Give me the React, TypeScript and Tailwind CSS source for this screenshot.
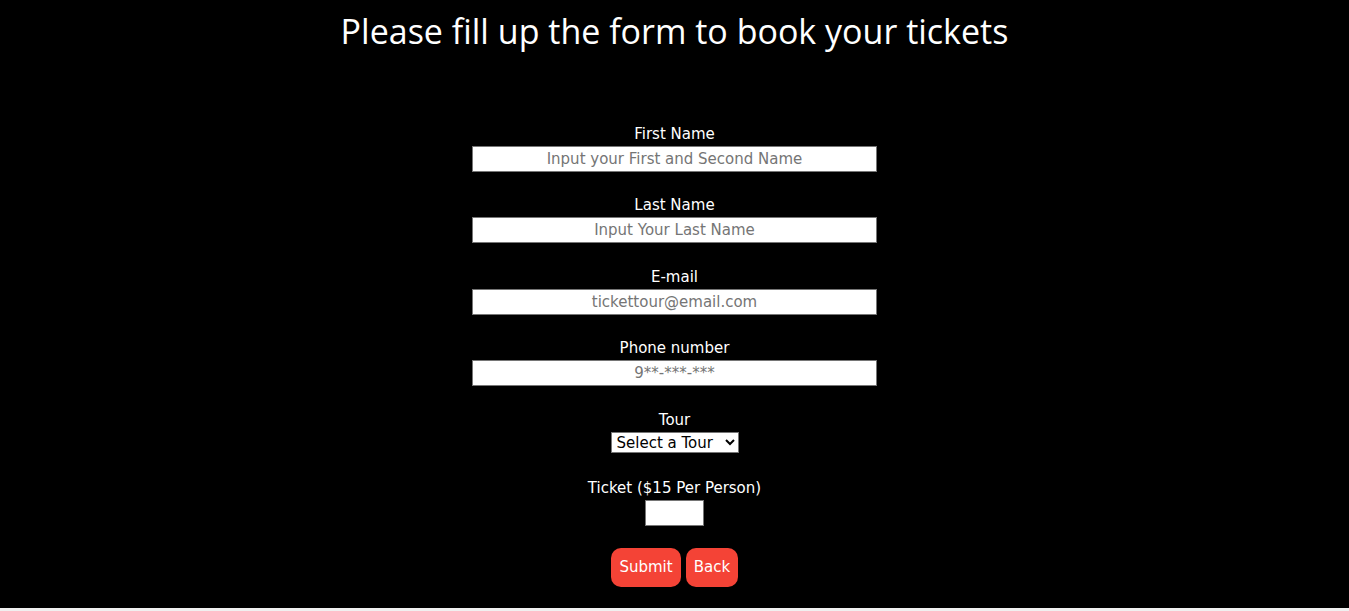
import React from "react";

const labelCls = "text-white text-[15px] leading-[18px] mb-[3px]";
const inputCls =
  "w-[405px] h-[26px] bg-white border border-[#767676] text-center text-[15px] text-black placeholder:text-[#757575] outline-none";

function Field({ label, placeholder, type = "text", className = "" }: { label: string; placeholder: string; type?: string; className?: string }) {
  return (
    <div className={"flex flex-col items-center " + className}>
      <label className={labelCls}>{label}</label>
      <input type={type} placeholder={placeholder} className={inputCls} />
    </div>
  );
}

export default function App() {
  return (
    <div className="w-full h-[611px] bg-[#f0f0f0]" style={{ fontFamily: '"DejaVu Sans", Verdana, sans-serif' }}>
      <div className="h-[608px] bg-black flex flex-col items-center">
        <h1
          className="text-white text-[34px] leading-[44px] mt-[9px]"
          style={{ fontFamily: '"Open Sans", "Noto Sans", sans-serif' }}
        >
          Please fill up the form to book your tickets
        </h1>
        <form className="flex flex-col items-center mt-[72px]">
          <Field label="First Name" placeholder="Input your First and Second Name" />
          <Field label="Last Name" placeholder="Input Your Last Name" className="mt-[24px]" />
          <Field label="E-mail" placeholder="tickettour@email.com" type="email" className="mt-[25px]" />
          <Field label="Phone number" placeholder="9**-***-***" type="tel" className="mt-[24px]" />
          <div className="flex flex-col items-center mt-[25px]">
            <label className={labelCls}>Tour</label>
            <select className="w-[128px] h-[21px] bg-white text-black text-[15px] border border-[#767676] rounded-none px-[1px]">
              <option>Select a Tour</option>
            </select>
          </div>
          <div className="flex flex-col items-center mt-[26px]">
            <label className={labelCls}>Ticket ($15 Per Person)</label>
            <input type="number" className="w-[59px] h-[26px] bg-white border border-[#767676] outline-none" />
          </div>
          <div className="flex gap-[5px] mt-[22px]">
            <button type="button" className="bg-[#f44336] text-white text-[15px] w-[70px] h-[39px] rounded-[10px]">
              Submit
            </button>
            <button type="button" className="bg-[#f44336] text-white text-[15px] w-[52px] h-[39px] rounded-[10px]">
              Back
            </button>
          </div>
        </form>
      </div>
    </div>
  );
}
